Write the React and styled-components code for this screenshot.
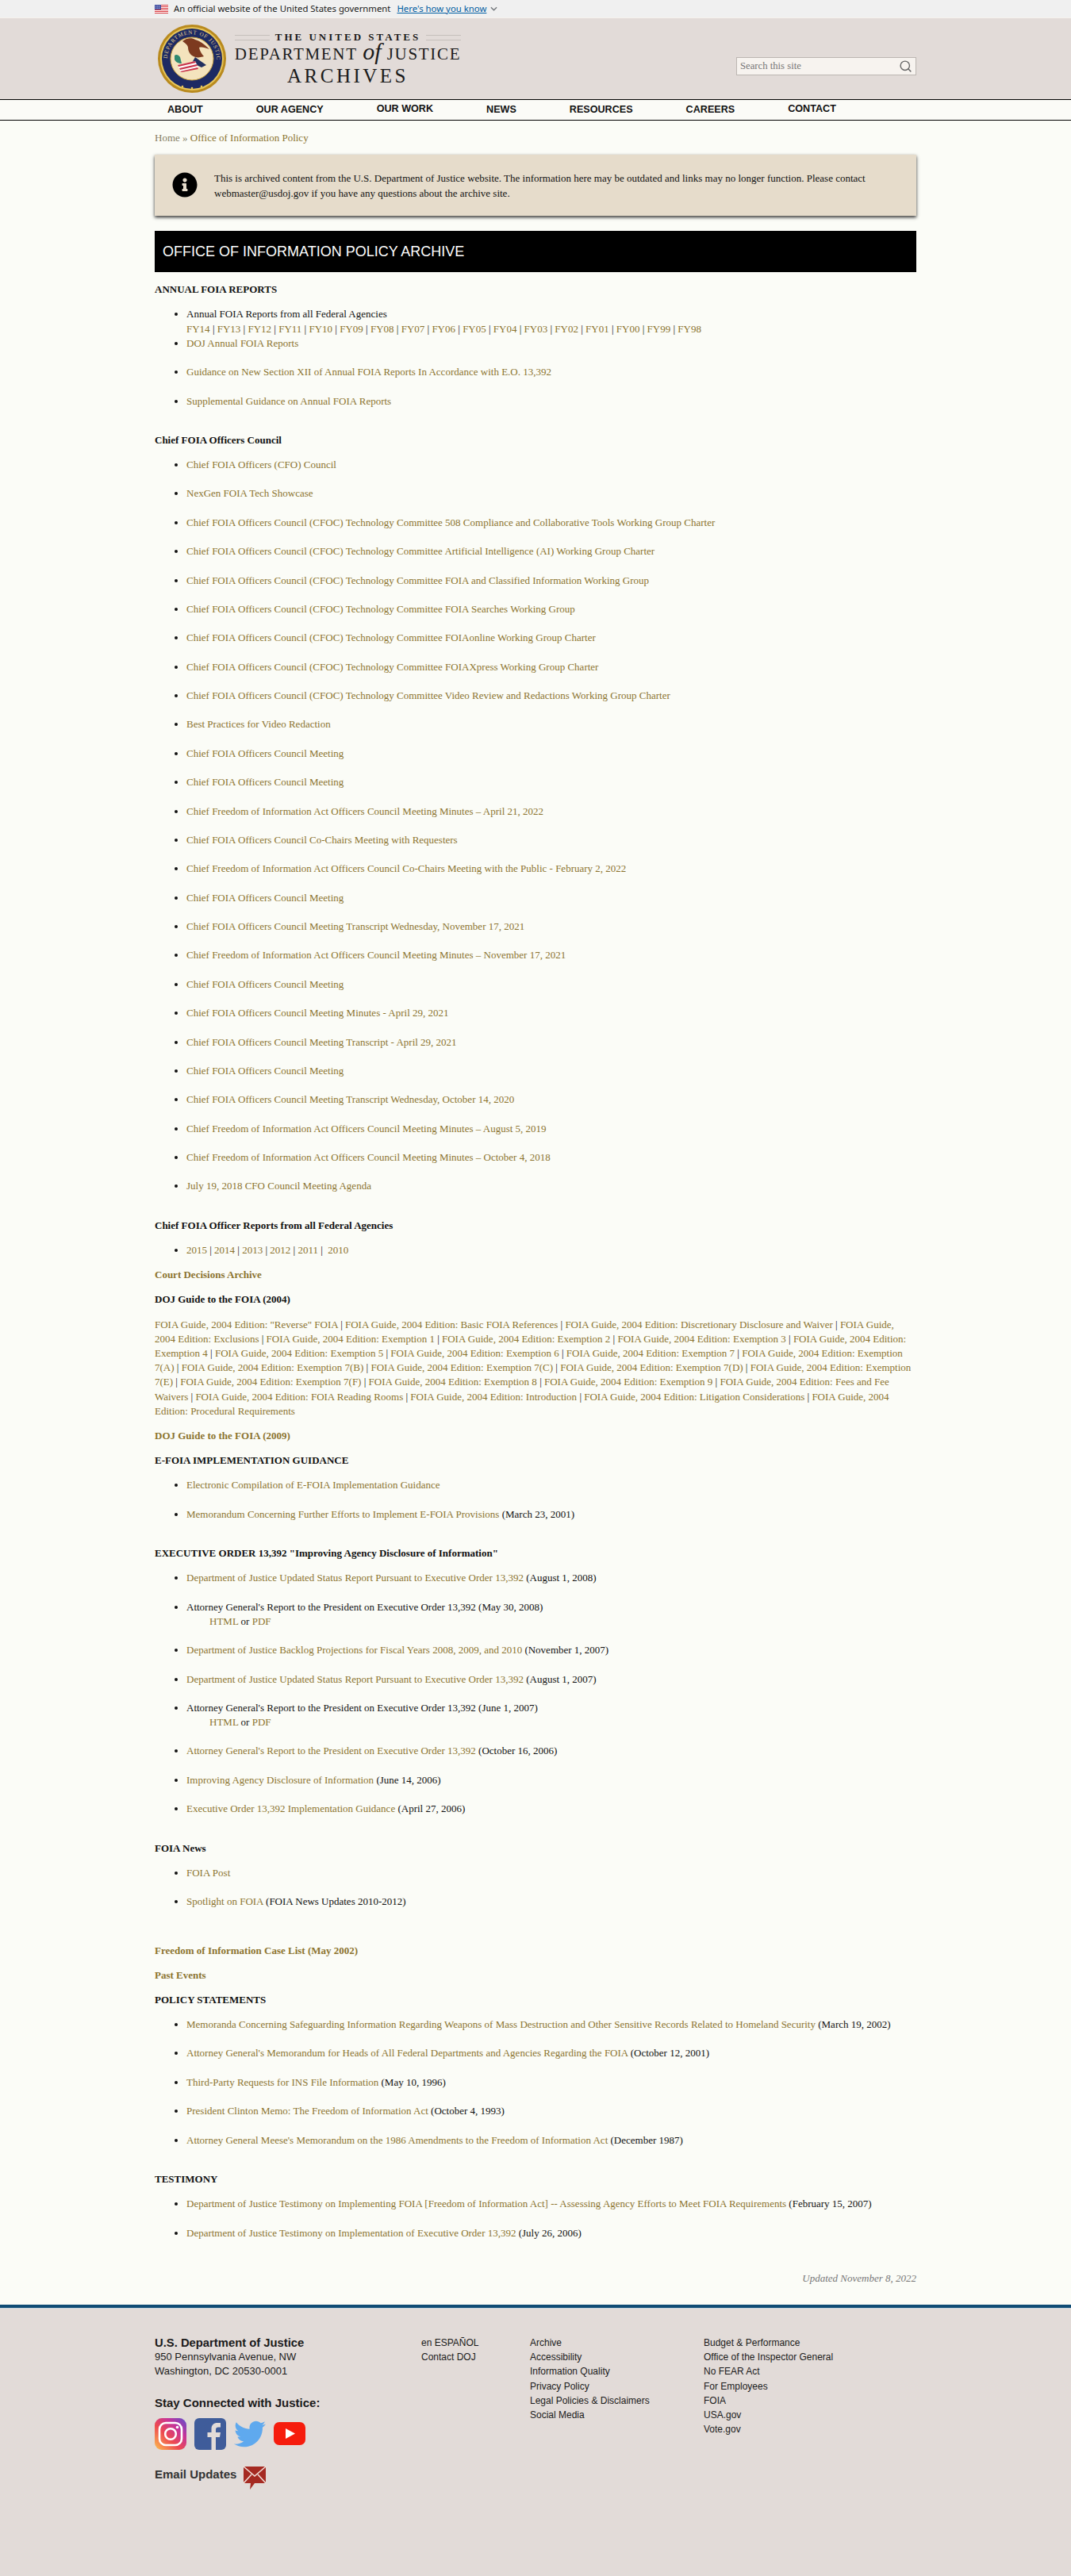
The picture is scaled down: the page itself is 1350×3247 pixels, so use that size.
import React from 'react';
import styled, { createGlobalStyle } from 'styled-components';
import { FaInfoCircle, FaTwitter } from 'react-icons/fa';
import { FiSearch } from 'react-icons/fi';

const GlobalStyle = createGlobalStyle`
  html, body { margin: 0; padding: 0; background: #fbfcf7; }
  body { font-family: "Liberation Serif", "Times New Roman", serif; font-size: 13px; line-height: 1.4; color: #111; }
  a { color: inherit; text-decoration: none; }
`;

const fiscalYears = ['FY14','FY13','FY12','FY11','FY10','FY09','FY08','FY07','FY06','FY05','FY04','FY03','FY02','FY01','FY00','FY99','FY98'];

const annualLinks = [
  'Guidance on New Section XII of Annual FOIA Reports In Accordance with E.O. 13,392',
  'Supplemental Guidance on Annual FOIA Reports',
];

const councilLinks = [
  'Chief FOIA Officers (CFO) Council',
  'NexGen FOIA Tech Showcase',
  'Chief FOIA Officers Council (CFOC) Technology Committee 508 Compliance and Collaborative Tools Working Group Charter',
  'Chief FOIA Officers Council (CFOC) Technology Committee Artificial Intelligence (AI) Working Group Charter',
  'Chief FOIA Officers Council (CFOC) Technology Committee FOIA and Classified Information Working Group',
  'Chief FOIA Officers Council (CFOC) Technology Committee FOIA Searches Working Group',
  'Chief FOIA Officers Council (CFOC) Technology Committee FOIAonline Working Group Charter',
  'Chief FOIA Officers Council (CFOC) Technology Committee FOIAXpress Working Group Charter',
  'Chief FOIA Officers Council (CFOC) Technology Committee Video Review and Redactions Working Group Charter',
  'Best Practices for Video Redaction',
  'Chief FOIA Officers Council Meeting',
  'Chief FOIA Officers Council Meeting',
  'Chief Freedom of Information Act Officers Council Meeting Minutes – April 21, 2022',
  'Chief FOIA Officers Council Co-Chairs Meeting with Requesters',
  'Chief Freedom of Information Act Officers Council Co-Chairs Meeting with the Public - February 2, 2022',
  'Chief FOIA Officers Council Meeting',
  'Chief FOIA Officers Council Meeting Transcript Wednesday, November 17, 2021',
  'Chief Freedom of Information Act Officers Council Meeting Minutes – November 17, 2021',
  'Chief FOIA Officers Council Meeting',
  'Chief FOIA Officers Council Meeting Minutes - April 29, 2021',
  'Chief FOIA Officers Council Meeting Transcript - April 29, 2021',
  'Chief FOIA Officers Council Meeting',
  'Chief FOIA Officers Council Meeting Transcript Wednesday, October 14, 2020',
  'Chief Freedom of Information Act Officers Council Meeting Minutes – August 5, 2019',
  'Chief Freedom of Information Act Officers Council Meeting Minutes – October 4, 2018',
  'July 19, 2018 CFO Council Meeting Agenda',
];

const guideTopics = [
  '"Reverse" FOIA','Basic FOIA References','Discretionary Disclosure and Waiver','Exclusions',
  'Exemption 1','Exemption 2','Exemption 3','Exemption 4','Exemption 5','Exemption 6','Exemption 7',
  'Exemption 7(A)','Exemption 7(B)','Exemption 7(C)','Exemption 7(D)','Exemption 7(E)','Exemption 7(F)',
  'Exemption 8','Exemption 9','Fees and Fee Waivers','FOIA Reading Rooms','Introduction',
  'Litigation Considerations','Procedural Requirements',
];

const executiveOrder = [
  { link: 'Department of Justice Updated Status Report Pursuant to Executive Order 13,392', date: '(August 1, 2008)' },
  { text: "Attorney General's Report to the President on Executive Order 13,392 (May 30, 2008)", formats: true },
  { link: 'Department of Justice Backlog Projections for Fiscal Years 2008, 2009, and 2010', date: '(November 1, 2007)' },
  { link: 'Department of Justice Updated Status Report Pursuant to Executive Order 13,392', date: '(August 1, 2007)' },
  { text: "Attorney General's Report to the President on Executive Order 13,392 (June 1, 2007)", formats: true },
  { link: "Attorney General's Report to the President on Executive Order 13,392", date: '(October 16, 2006)' },
  { link: 'Improving Agency Disclosure of Information', date: '(June 14, 2006)' },
  { link: 'Executive Order 13,392 Implementation Guidance', date: '(April 27, 2006)' },
];

const policyStatements = [
  { link: 'Memoranda Concerning Safeguarding Information Regarding Weapons of Mass Destruction and Other Sensitive Records Related to Homeland Security', date: '(March 19, 2002)' },
  { link: "Attorney General's Memorandum for Heads of All Federal Departments and Agencies Regarding the FOIA", date: '(October 12, 2001)' },
  { link: 'Third-Party Requests for INS File Information', date: '(May 10, 1996)' },
  { link: 'President Clinton Memo: The Freedom of Information Act', date: '(October 4, 1993)' },
  { link: "Attorney General Meese's Memorandum on the 1986 Amendments to the Freedom of Information Act", date: '(December 1987)' },
];

const testimony = [
  { link: 'Department of Justice Testimony on Implementing FOIA [Freedom of Information Act] -- Assessing Agency Efforts to Meet FOIA Requirements', date: '(February 15, 2007)' },
  { link: 'Department of Justice Testimony on Implementation of Executive Order 13,392', date: '(July 26, 2006)' },
];

const navItems = [
  { label: 'About' }, { label: 'Our Agency' }, { label: 'Our Work', raised: true }, { label: 'News' },
  { label: 'Resources' }, { label: 'Careers' }, { label: 'Contact', raised: true },
];

const footerColumns = [
  { width: 137, links: ['en ESPAÑOL', 'Contact DOJ'] },
  { width: 219, links: ['Archive', 'Accessibility', 'Information Quality', 'Privacy Policy', 'Legal Policies & Disclaimers', 'Social Media'] },
  { width: 200, links: ['Budget & Performance', 'Office of the Inspector General', 'No FEAR Act', 'For Employees', 'FOIA', 'USA.gov', 'Vote.gov'] },
];

const FlagIcon = () => (
  <svg width="17" height="11" viewBox="0 0 17 11">
    <rect width="17" height="11" fill="#fff" />
    {[0, 2, 4, 6, 8, 10].map((y) => <rect key={y} y={y} width="17" height="1" fill="#d8393f" />)}
    <rect width="8" height="6" fill="#3c4a9e" />
    <path d="M1 1.5h6M1 3h6M1 4.5h6" stroke="#cdd3ee" strokeWidth=".7" strokeDasharray="1 .8" />
  </svg>
);

const Seal = () => (
  <svg width="88" height="88" viewBox="0 0 88 88">
    <defs>
      <path id="sealTop" d="M44 44 m-31 0 a31 31 0 1 1 62 0" />
    </defs>
    <circle cx="44" cy="44" r="43" fill="#b98a1e" />
    <circle cx="44" cy="44" r="40" fill="#e8c65a" />
    <circle cx="44" cy="44" r="38" fill="#1d2a63" />
    <circle cx="44" cy="44" r="27" fill="#f4e3bd" />
    <circle cx="44" cy="44" r="27" fill="none" stroke="#c9a13d" strokeWidth="1" />
    <text fontFamily="Liberation Serif, serif" fontSize="7" fill="#e3cf8d" letterSpacing=".9">
      <textPath href="#sealTop">DEPARTMENT OF JUSTICE</textPath>
    </text>
    <path d="M32 22c4-4 12-5 16-2 5 1 12 6 18 12-6-2-10-3-13-2 1 4 3 8 6 11-5 2-11 2-15-1-3-2-5-6-5-10 0-3-3-5-7-8z" fill="#7d3a1f" />
    <path d="M48 42l14 10-6 3-12-6z" fill="#23305f" />
    <path d="M22 40c2-2 5-1 7 2l2 8c-4 0-8-2-9-5z" fill="#2f8a70" />
    <path d="M26 52l22-5 4 8-22 6z" fill="#fff" />
    <path d="M26 52l22-5 1 2-22 5zM28 56l22-5 1 2-22 5zM29 60l22-5 1 2-21 4z" fill="#c8344a" />
    <circle cx="32" cy="79" r="1.3" fill="#e8c65a" />
    <circle cx="44" cy="81" r="1.3" fill="#e8c65a" />
    <circle cx="56" cy="79" r="1.3" fill="#e8c65a" />
  </svg>
);

const InstagramIcon = () => (
  <svg width="40" height="40" viewBox="0 0 40 40">
    <defs>
      <linearGradient id="igGrad" x1="0" y1="1" x2="1" y2="0">
        <stop offset="0" stopColor="#fdc14f" />
        <stop offset=".4" stopColor="#ee4a4f" />
        <stop offset=".7" stopColor="#c5339a" />
        <stop offset="1" stopColor="#5a4fcf" />
      </linearGradient>
    </defs>
    <rect width="40" height="40" rx="9" fill="url(#igGrad)" />
    <rect x="6" y="6" width="28" height="28" rx="8" fill="none" stroke="#fff" strokeWidth="2.6" />
    <circle cx="20" cy="20" r="6.8" fill="none" stroke="#fff" strokeWidth="2.6" />
    <circle cx="28.5" cy="11.5" r="1.8" fill="#fff" />
  </svg>
);

const FacebookIcon = () => (
  <svg width="40" height="40" viewBox="0 0 40 40">
    <rect width="40" height="40" rx="6" fill="#3f5c9a" />
    <path d="M21.5 40V24h-5v-6h5v-4.500c0-5 3-7.500 7.500-7.500h4v5.500h-3c-2 0-3 1-3 3V18h6l-1 6h-5v16z" fill="#e2dbd8" />
  </svg>
);

const YoutubeIcon = () => (
  <svg width="40" height="40" viewBox="0 0 40 40">
    <rect y="5" width="40" height="29" rx="7" fill="#f61c0d" />
    <polygon points="15,13 15,26 27,19.500" fill="#fff" />
  </svg>
);

const EmailIcon = () => (
  <svg width="30" height="30" viewBox="0 0 30 30">
    <path d="M1 1h28v21H15l-6 8 1-8H1z" fill="#a52a22" />
    <path d="M1 1l14 12L29 1M1 22l10-11M29 22L19 11" fill="none" stroke="#f3e2dc" strokeWidth="1.500" />
  </svg>
);

const ItemRow = ({ item }) => (
  <Item>
    {item.link ? <><Link>{item.link}</Link> {item.date}</> : item.text}
    {item.formats && (
      <Formats><Link>HTML</Link> or <Link>PDF</Link></Formats>
    )}
  </Item>
);

const App = () => (
  <>
    <GlobalStyle />
    <Banner>
      <BannerInner>
        <FlagIcon />
        <BannerText>An official website of the United States government</BannerText>
        <BannerLink>Here's how you know</BannerLink>
        <Chevron viewBox="0 0 10 6"><path d="M1 1l4 4 4-4" /></Chevron>
      </BannerInner>
    </Banner>

    <Masthead>
      <MastheadInner>
        <Brand>
          <Seal />
          <Wordmark>
            <Eyebrow>The United States</Eyebrow>
            <Department>
              Department <Script>of</Script> Justice
            </Department>
            <Archives>Archives</Archives>
          </Wordmark>
        </Brand>
        <SearchBox>
          <SearchPlaceholder>Search this site</SearchPlaceholder>
          <FiSearch size={17} color="#666" />
        </SearchBox>
      </MastheadInner>
    </Masthead>

    <NavBar>
      <NavInner>
        {navItems.map((item) => (
          <NavLink key={item.label} $raised={item.raised}>{item.label}</NavLink>
        ))}
      </NavInner>
    </NavBar>

    <Main>
      <Breadcrumb><Muted>Home »</Muted> <Link>Office of Information Policy</Link></Breadcrumb>

      <Notice>
        <NoticeIcon><FaInfoCircle size={32} /></NoticeIcon>
        <NoticeText>
          This is archived content from the U.S. Department of Justice website. The information here may be outdated and links may no longer function. Please contact webmaster@usdoj.gov if you have any questions about the archive site.
        </NoticeText>
      </Notice>

      <PageTitle>OFFICE OF INFORMATION POLICY ARCHIVE</PageTitle>

      <Heading>ANNUAL FOIA REPORTS</Heading>
      <List>
        <Item $flush>
          Annual FOIA Reports from all Federal Agencies
          <br />
          {fiscalYears.map((fy, i) => (
            <React.Fragment key={fy}>{i > 0 && ' | '}<Link>{fy}</Link></React.Fragment>
          ))}
        </Item>
        <Item><Link>DOJ Annual FOIA Reports</Link></Item>
        {annualLinks.map((label) => <Item key={label}><Link>{label}</Link></Item>)}
      </List>

      <Heading>Chief FOIA Officers Council</Heading>
      <List>
        {councilLinks.map((label, i) => <Item key={i}><Link>{label}</Link></Item>)}
      </List>

      <Heading>Chief FOIA Officer Reports from all Federal Agencies</Heading>
      <List>
        <Item $flush>
          <Link>2015</Link> | <Link>2014</Link> | <Link>2013</Link> | <Link>2012</Link> | <Link>2011</Link> |&nbsp; <Link>2010</Link>
        </Item>
      </List>

      <Heading><Link>Court Decisions Archive</Link></Heading>
      <Heading>DOJ Guide to the FOIA (2004)</Heading>
      <Paragraph>
        {guideTopics.map((topic, i) => (
          <React.Fragment key={topic}>{i > 0 && ' | '}<Link>FOIA Guide, 2004 Edition: {topic}</Link></React.Fragment>
        ))}
      </Paragraph>
      <Heading><Link>DOJ Guide to the FOIA (2009)</Link></Heading>

      <Heading>E-FOIA IMPLEMENTATION GUIDANCE</Heading>
      <List>
        <ItemRow item={{ link: 'Electronic Compilation of E-FOIA Implementation Guidance' }} />
        <ItemRow item={{ link: 'Memorandum Concerning Further Efforts to Implement E-FOIA Provisions', date: '(March 23, 2001)' }} />
      </List>

      <Heading>EXECUTIVE ORDER 13,392 "Improving Agency Disclosure of Information"</Heading>
      <List>
        {executiveOrder.map((item, i) => <ItemRow key={i} item={item} />)}
      </List>

      <Heading>FOIA News</Heading>
      <List>
        <ItemRow item={{ link: 'FOIA Post' }} />
        <ItemRow item={{ link: 'Spotlight on FOIA', date: '(FOIA News Updates 2010-2012)' }} />
      </List>

      <Heading $top={25}><Link>Freedom of Information Case List (May 2002)</Link></Heading>
      <Heading><Link>Past Events</Link></Heading>
      <Heading>POLICY STATEMENTS</Heading>
      <List>
        {policyStatements.map((item, i) => <ItemRow key={i} item={item} />)}
      </List>

      <Heading>TESTIMONY</Heading>
      <List>
        {testimony.map((item, i) => <ItemRow key={i} item={item} />)}
      </List>

      <Updated>Updated November 8, 2022</Updated>
    </Main>

    <Footer>
      <FooterInner>
        <FooterAddress>
          <FooterTitle>U.S. Department of Justice</FooterTitle>
          <div>950 Pennsylvania Avenue, NW</div>
          <div>Washington, DC 20530-0001</div>
          <ConnectTitle>Stay Connected with Justice:</ConnectTitle>
          <SocialRow>
            <InstagramIcon />
            <FacebookIcon />
            <TwitterSlot><FaTwitter size={40} /></TwitterSlot>
            <YoutubeIcon />
          </SocialRow>
          <EmailRow>
            <EmailLabel>Email Updates</EmailLabel>
            <EmailIcon />
          </EmailRow>
        </FooterAddress>
        {footerColumns.map((col) => (
          <FooterColumn key={col.links[0]} $width={col.width}>
            {col.links.map((label) => <FooterLink key={label}>{label}</FooterLink>)}
          </FooterColumn>
        ))}
      </FooterInner>
    </Footer>
  </>
);

const Banner = styled.div`
  height: 22px;
  background: #f0f0f0;
  border-bottom: 1px solid #f6f1ec;
`;

const BannerInner = styled.div`
  width: 960px;
  height: 22px;
  margin: 0 auto;
  display: flex;
  align-items: center;
  font-family: "Noto Sans", "Open Sans", sans-serif;
  font-size: 11.35px;
  color: #1b1b1b;
`;

const BannerText = styled.span`
  margin-left: 7px;
`;

const BannerLink = styled.a`
  margin-left: 8px;
  color: #005ea2;
  text-decoration: underline;
`;

const Chevron = styled.svg`
  width: 9px;
  height: 6px;
  margin-left: 5px;
  fill: none;
  stroke: #71767a;
  stroke-width: 1.500;
`;

const Masthead = styled.header`
  height: 102px;
  background: #e2dbd8;
`;

const MastheadInner = styled.div`
  width: 960px;
  height: 102px;
  margin: 0 auto;
  display: flex;
  align-items: center;
  justify-content: space-between;
`;

const Brand = styled.div`
  display: flex;
  align-items: center;
  gap: 10px;
  padding-left: 3px;
`;

const Wordmark = styled.div`
  width: 285px;
  margin-top: 2px;
  display: flex;
  flex-direction: column;
  align-items: center;
  font-family: "Liberation Serif", serif;
  color: #1a1a1a;
  text-transform: uppercase;
`;

const Eyebrow = styled.div`
  display: flex;
  align-items: center;
  align-self: stretch;
  gap: 7px;
  font-size: 13px;
  line-height: 14px;
  font-weight: bold;
  letter-spacing: 3px;
  white-space: nowrap;
  &::before, &::after {
    content: '';
    flex: 1;
    height: 5px;
    border-top: 1px solid #c5bfbb;
    border-bottom: 1px solid #c5bfbb;
  }
`;

const Department = styled.div`
  font-size: 21px;
  line-height: 28px;
  letter-spacing: 1.700px;
  white-space: nowrap;
`;

const Script = styled.span`
  font-size: 30px;
  line-height: 0;
  font-style: italic;
  letter-spacing: 0;
  text-transform: lowercase;
`;

const Archives = styled.div`
  font-size: 25px;
  line-height: 28px;
  letter-spacing: 3.500px;
`;

const SearchBox = styled.div`
  width: 227px;
  height: 23px;
  box-sizing: border-box;
  display: flex;
  align-items: center;
  justify-content: space-between;
  padding: 0 4px;
  background: #f7f3ef;
  border: 1px solid #bcb6b2;
  margin-top: 19px;
`;

const SearchPlaceholder = styled.span`
  font-size: 12.7px;
  color: #777;
`;

const NavBar = styled.nav`
  height: 25px;
  background: #fbfbf7;
  border-top: 1px solid #000;
  border-bottom: 1px solid #000;
`;

const NavInner = styled.div`
  width: 960px;
  height: 25px;
  box-sizing: border-box;
  margin: 0 auto;
  padding-left: 16px;
  display: flex;
  align-items: center;
  gap: 67px;
`;

const NavLink = styled.a`
  font-family: "Liberation Sans", Arial, sans-serif;
  font-size: 12.6px;
  font-weight: bold;
  color: #111;
  text-transform: uppercase;
  transform: translateY(${(p) => (p.$raised ? '-1px' : '0')});
`;

const Main = styled.main`
  width: 960px;
  margin: 0 auto;
  padding-top: 13px;
  box-sizing: border-box;
`;

const Breadcrumb = styled.div`
  margin-bottom: 12px;
`;

const Muted = styled.span`
  color: #857c63;
`;

const Link = styled.a`
  color: #8c7430;
`;

const Notice = styled.div`
  height: 77px;
  display: flex;
  align-items: center;
  background: #e6dccb;
  box-shadow: 0 2px 4px rgba(0, 0, 0, 0.8);
`;

const NoticeIcon = styled.div`
  width: 75px;
  display: flex;
  justify-content: center;
  padding-left: 1px;
  box-sizing: border-box;
  flex: none;
  color: #000;
  margin-top: -2px;
`;

const NoticeText = styled.p`
  margin: 0;
  width: 830px;
  line-height: 19px;
`;

const PageTitle = styled.h1`
  margin: 19px 0 0;
  height: 52px;
  box-sizing: border-box;
  padding-left: 10px;
  display: flex;
  align-items: center;
  background: #000;
  color: #fff;
  font-family: "Liberation Sans", Arial, sans-serif;
  font-size: 18px;
  font-weight: normal;
`;

const Heading = styled.p`
  margin: ${(p) => p.$top ?? 13}px 0 13px;
  font-weight: bold;
`;

const Paragraph = styled.p`
  margin: 13px 0;
`;

const List = styled.ul`
  margin: 13px 0;
  padding-left: 40px;
`;

const Item = styled.li`
  padding-bottom: ${(p) => (p.$flush ? 0 : 18.2)}px;
`;

const Formats = styled.div`
  padding-left: 29px;
`;

const Updated = styled.p`
  margin: 21px 0 0;
  padding-bottom: 24px;
  text-align: right;
  font-style: italic;
  color: #777;
`;

const Footer = styled.footer`
  height: 340px;
  background: #e2dbd8;
  border-top: 4px solid #0f4c75;
  box-shadow: inset 0 1px 0 #c8d6df;
`;

const FooterInner = styled.div`
  width: 960px;
  margin: 0 auto;
  padding-top: 35px;
  display: flex;
  font-family: "Liberation Sans", Arial, sans-serif;
  font-size: 13px;
  line-height: 18.2px;
  color: #1a1a1a;
`;

const FooterAddress = styled.div`
  width: 336px;
  flex: none;
`;

const FooterTitle = styled.div`
  font-size: 14.8px;
  font-weight: bold;
`;

const ConnectTitle = styled.div`
  margin-top: 19px;
  font-size: 15px;
  line-height: 21px;
  font-weight: bold;
`;

const SocialRow = styled.div`
  display: flex;
  gap: 10px;
  margin-top: 9px;
`;

const TwitterSlot = styled.div`
  width: 40px;
  height: 40px;
  color: #5fa9ee;
`;

const EmailRow = styled.div`
  display: flex;
  align-items: flex-start;
  gap: 8px;
  margin-top: 20px;
`;

const EmailLabel = styled.span`
  font-size: 15px;
  line-height: 21px;
  font-weight: bold;
  color: #333;
`;

const FooterColumn = styled.div`
  width: ${(p) => p.$width}px;
  flex: none;
  display: flex;
  flex-direction: column;
  font-size: 12px;
`;

const FooterLink = styled.a`
  color: #1a1a1a;
`;

export default App;
